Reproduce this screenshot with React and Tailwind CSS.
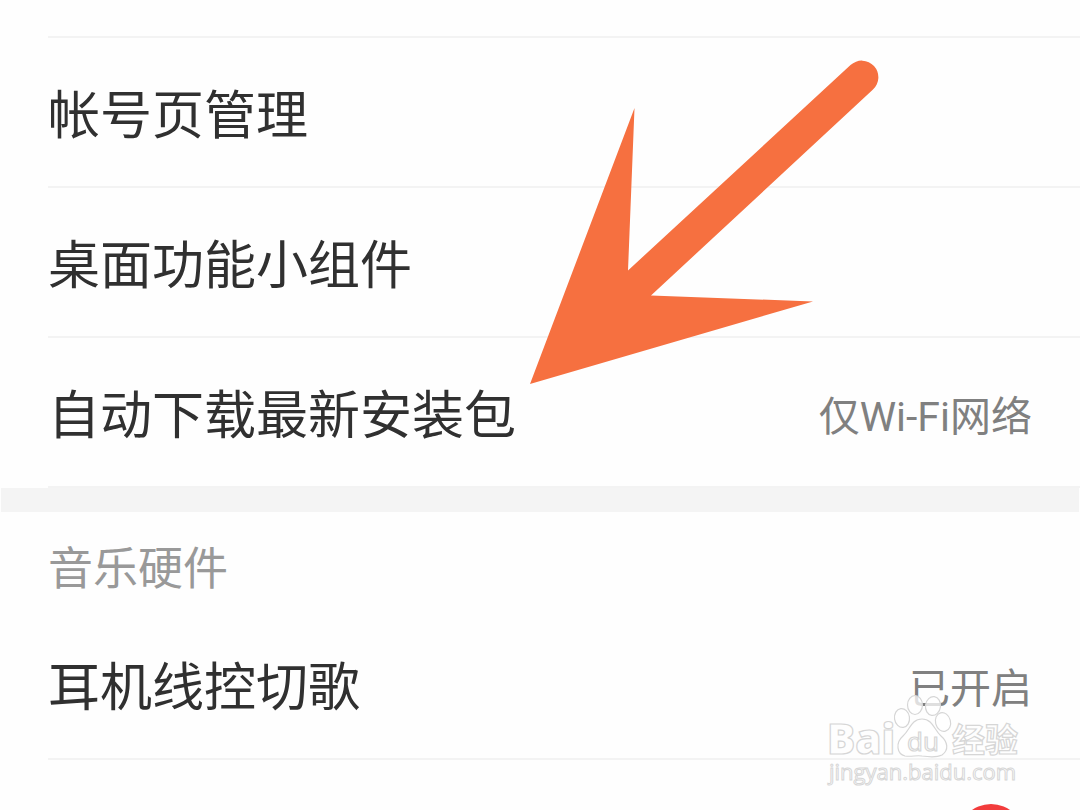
import { useState } from 'react';

const accountRows = [
  { id: 'account', name: '帐号页管理' },
  { id: 'widget', name: '桌面功能小组件' },
  { id: 'package', name: '自动下载最新安装包', value: '仅Wi-Fi网络' },
];

const hardwareRows = [{ id: 'headset', name: '耳机线控切歌', value: '已开启' }];

function SettingRow({ name, value, className }) {
  return (
    <button
      type="button"
      className={`flex w-full items-center justify-between border-b-2 border-[#f3f3f3] pt-2.5 pr-12 text-left ${className}`}
    >
      <span className="text-[52px] leading-[60px] text-[#303030]">{name}</span>
      {value && <span className="text-[41px] leading-[60px] text-[#808080]">{value}</span>}
    </button>
  );
}

function Arrow() {
  return (
    <svg
      viewBox="0 0 350 324"
      className="pointer-events-none absolute top-[60px] left-[530px] w-[350px]"
      aria-hidden="true"
    >
      <path
        d="M0 324L104.500 48L98 210.500L320.500 5A16.500 16.500 0 0 1 343 29.500L121 235.500L283 241.500Z"
        fill="#f67040"
      />
    </svg>
  );
}

function Watermark() {
  return (
    <svg
      viewBox="0 0 200 96"
      className="pointer-events-none absolute right-[54px] bottom-[20px] w-[200px]"
      fill="#ffffff"
      fillOpacity="0.75"
      stroke="#d6d6d6"
      strokeWidth="1.2"
      aria-hidden="true"
    >
      <text x="1" y="60" fontSize="42" fontWeight="800" fontFamily="'Open Sans', sans-serif">Bai</text>
      <ellipse cx="76" cy="24" rx="7.500" ry="9.500" transform="rotate(-8 76 24)" />
      <ellipse cx="89" cy="11" rx="7.500" ry="9.500" />
      <ellipse cx="107" cy="12" rx="7.500" ry="9.500" transform="rotate(8 107 12)" />
      <ellipse cx="117" cy="28" rx="7.500" ry="9.500" transform="rotate(-15 117 28)" />
      <path d="M96 25C85 25 84 36 77 42C69 49 71 60 79 62C86 63 90 61 96 62C103 63 110 64 116 61C123 56 122 48 115 42C108 36 107 25 96 25Z" />
      <text x="81" y="57" fontSize="26" fontWeight="400" fontFamily="'Open Sans', sans-serif">du</text>
      <text x="126" y="58" fontSize="33" fontWeight="700" fontFamily="'Noto Sans CJK SC', sans-serif">经验</text>
      <text x="3" y="86" fontSize="22" strokeWidth="1" fontFamily="'Open Sans', sans-serif">jingyan.baidu.com</text>
    </svg>
  );
}

function App() {
  const [enabled, setEnabled] = useState(true);

  return (
    <main className="relative h-screen overflow-hidden bg-[#fefefe] font-['Roboto','Noto_Sans_CJK_SC',sans-serif]">
      <section className="pl-12">
        <div className="h-[38px] border-b-2 border-[#f3f3f3]" />
        {accountRows.map((row) => (
          <SettingRow key={row.id} name={row.name} value={row.value} className="h-[150px]" />
        ))}
      </section>

      <div className="mx-px h-6 bg-[#f4f4f4]" />

      <section className="pl-12">
        <h2 className="pt-7 text-[45px] leading-[60px] text-[#999999]">音乐硬件</h2>
        {hardwareRows.map((row) => (
          <SettingRow key={row.id} name={row.name} value={row.value} className="mt-2.5 h-[150px]" />
        ))}
        <div className="flex h-[154px] items-center justify-end pr-14">
          <input
            type="checkbox"
            aria-label="开关"
            checked={enabled}
            onChange={() => setEnabled(!enabled)}
            className="size-[66px] appearance-none rounded-full bg-[#cccccc] shadow-md checked:bg-[#f23c3c]"
          />
        </div>
      </section>

      <Arrow />
      <Watermark />
    </main>
  );
}

export default App;
